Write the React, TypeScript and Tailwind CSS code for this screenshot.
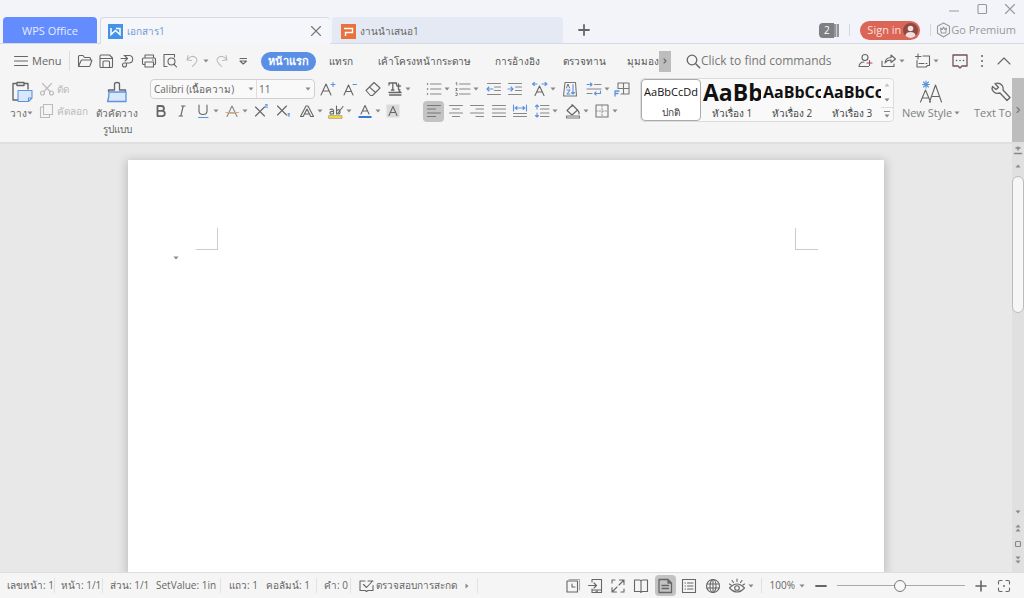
import React from "react";

type IconProps = { children: React.ReactNode; w?: number; h?: number; className?: string };

function Icon({ children, w = 18, h = 18, className = "" }: IconProps) {
  return (
    <svg
      width={w}
      height={h}
      viewBox={`0 0 ${w} ${h}`}
      fill="none"
      stroke="currentColor"
      strokeWidth="1.1"
      strokeLinecap="round"
      strokeLinejoin="round"
      aria-hidden="true"
      className={`shrink-0 ${className}`}
    >
      {children}
    </svg>
  );
}

function Caret() {
  return (
    <svg width="6" height="4" viewBox="0 0 6 4" aria-hidden="true" className="shrink-0">
      <path d="M0.5 0.5h5L3 3.5z" fill="#888" />
    </svg>
  );
}

type ToolProps = {
  label: string;
  slot: string;
  icon: React.ReactNode;
  caret?: boolean;
  active?: boolean;
};

function Tool({ label, slot, icon, caret, active }: ToolProps) {
  return (
    <div className={`flex shrink-0 ${slot}`}>
      <button type="button" aria-label={label} aria-pressed={active} className="flex h-[22px] items-center">
        <span
          className={`flex h-[21px] w-[21px] items-center justify-center rounded ${active ? "bg-[#c3c3c3]" : ""}`}
        >
          {icon}
        </span>
        {caret && <Caret />}
      </button>
    </div>
  );
}

const BLUE = "#5b93e0";

const quickTools: ToolProps[] = [
  {
    label: "Open", slot: "w-[21px]",
    icon: <Icon><path d="M2.500 14.500V4.500q0-1 1-1h3.500l1.500 2h5q1 0 1 1v1.500M2.500 14.500h10.500q.8 0 1-.7l1.800-5q.2-.8-.7-.8H6q-.8 0-1 .7z" /></Icon>,
  },
  {
    label: "Save", slot: "w-[21px]",
    icon: <Icon><path d="M3 5V4q0-1 1-1h8.500L15.500 6v8.500q0 1-1 1H4q-1 0-1-1zM3 6.500h12M6 15.500V10q0-1 1-1h4.500q1 0 1 1v5.500" /></Icon>,
  },
  {
    label: "Export", slot: "w-[22px]",
    icon: <Icon><path d="M6 3.500h5.500a3.800 3.800 0 0 1 0 7.500H8M8.500 11v2a2 2 0 1 1-2-2h2M3 6.500h6M7 4l2.500 2.500L7 9" /></Icon>,
  },
  {
    label: "Print", slot: "w-[21px]",
    icon: <Icon><path d="M5 6V3h8.500v3M5 12.500H3.500q-1 0-1-1V7q0-1 1-1h11q1 0 1 1v4.500q0 1-1 1H13.500M5 10h8.500v5H5zM12.500 8h.8" /></Icon>,
  },
  {
    label: "Print preview", slot: "w-[23px]",
    icon: <Icon><path d="M6 14.500H3V2.500h10.500V5M15.500 14.800L12.800 12.100" /><circle cx="10.500" cy="9.500" r="3.500" /></Icon>,
  },
  {
    label: "Undo", slot: "w-[28px] text-[#bbb]", caret: true,
    icon: <Icon><path d="M4 3.500L3 8l4.500.5M3.500 7.800c2-3.500 6-4.500 8.500-2 2 2.200 1 4.500-3.500 8.500" /></Icon>,
  },
  {
    label: "Redo", slot: "w-[22px] text-[#bbb]",
    icon: <Icon><path d="M14 3.500L15 8l-4.500.5M14.500 7.800c-2-3.500-6-4.500-8.500-2-2 2.200-1 4.500 3.500 8.500" /></Icon>,
  },
  {
    label: "Customize quick access", slot: "w-[29px]",
    icon: <Icon><path d="M6 6.500h6.500M6 9h6.500L9.200 12z" /></Icon>,
  },
];

const formatTop: ToolProps[] = [
  { label: "Grow font", slot: "w-[22px]", icon: <Icon><path d="M2 15L7 4L12 15M3.700 11h6.600" /><path stroke={BLUE} d="M12 4.500h4M14 2.500v4" /></Icon> },
  { label: "Shrink font", slot: "w-[23px]", icon: <Icon><path d="M3 15L7.500 5L12 15M4.700 11.500h5.600" /><path stroke={BLUE} d="M12 4.500h3.500" /></Icon> },
  { label: "Clear formatting", slot: "w-[22px]", icon: <Icon><path d="M2 10.500L10 2.500l6 5.500L8.500 15.500H6.500zM5.500 7.200l6 5.300" /></Icon> },
  { label: "Text tools", slot: "w-[39px]", caret: true, icon: <Icon><path strokeWidth="1.300" d="M3 5V3h7.500v2M6.800 3v7M5.500 10H8M12.500 4v5q0 1 1.500.8M11 6h3.500M3 12.500h12M15 12.500l-2-1.500M3.500 15H15" /></Icon> },
  { label: "Bullets", slot: "w-[29px]", caret: true, icon: <Icon><path strokeWidth="1.500" d="M2.500 4h.1M2.500 9h.1M2.500 14h.1" /><path stroke="#888" d="M5.500 4H16M5.500 9H16M5.500 14H16" /></Icon> },
  { label: "Numbering", slot: "w-[31px]", caret: true, icon: <Icon><path d="M2 3l.8-.5V5M1.800 8.500h1.400L1.800 10.500h1.400M1.800 13h1.400v2.500H1.800" strokeWidth=".8" /><path stroke="#888" d="M5.500 4H16M5.500 9H16M5.500 14H16" /></Icon> },
  { label: "Decrease indent", slot: "w-[21px]", icon: <Icon><path stroke="#888" d="M2.500 3.500h13M9.500 7h6M9.500 10.500h6M2.500 14.500h13" /><path stroke={BLUE} d="M2 9h6M4 7L2 9l2 2" /></Icon> },
  { label: "Increase indent", slot: "w-[25px]", icon: <Icon><path stroke="#888" d="M2.500 3.500h13M9.500 7h6M9.500 10.500h6M2.500 14.500h13" /><path stroke={BLUE} d="M2 9h5M5 7l2 2-2 2" /></Icon> },
  { label: "Text scale", slot: "w-[30px]", caret: true, icon: <Icon><path d="M4 15.500L8.500 6L13 15.500M5.700 12h5.600" /><path stroke={BLUE} d="M1.500 4H6M3.500 2.500L1.500 4l2 1.500M11 4h5M14 2.500L16 4l-2 1.500" /></Icon> },
  { label: "Sort", slot: "w-[24px]", icon: <Icon><path stroke="#777" d="M4 2.500h10.500L15.500 16H2.500z" /><path d="M5.500 8l1.500-4 1.500 4" strokeWidth=".9" /><path stroke={BLUE} d="M6 10h3l-3 4h3M12 4.500V14M10.500 12.500L12 14l1.500-1.500" /></Icon> },
  { label: "Line wrap", slot: "w-[28px]", caret: true, icon: <Icon><path stroke="#888" d="M9.500 4.500H16M2 9h14M2 13.500h5" /><path stroke={BLUE} d="M2 4.500h5M5.500 3L7 4.500 5.500 6M15.500 11v2.500H9.500M11 12l-1.500 1.500L11 15" /></Icon> },
  { label: "Tab stops", slot: "w-[21px]", icon: <Icon><path stroke="#777" d="M5 8.500V3h11v11H8M5 8.500h11M10.500 3v11" /><path stroke={BLUE} strokeWidth="1.300" d="M2 16v-5h4M2 13.500h3" /></Icon> },
];

const formatBottom: ToolProps[] = [
  { label: "Bold", slot: "w-[21px]", icon: <Icon><path strokeWidth="1.800" d="M5.500 4h4a2.400 2.400 0 0 1 0 4.900h-4zM5.500 8.900h4.700a2.600 2.600 0 0 1 0 5.200H5.500z" /></Icon> },
  { label: "Italic", slot: "w-[21px]", icon: <Icon><path d="M8.500 4h3.500M6 14h3.500M10.200 4L7.800 14" /></Icon> },
  { label: "Underline", slot: "w-[29px]", caret: true, icon: <Icon><path d="M5 3v6q0 3.500 4 3.500T13 9V3" /><path stroke={BLUE} d="M4.500 15.500h9.500" /></Icon> },
  { label: "Strikethrough", slot: "w-[29px]", caret: true, icon: <Icon><path stroke="#888" d="M4 14.500L9 4L14 14.500M5.700 11h6.600" /><path stroke="#d9a877" d="M3 10.500h12.500" /></Icon> },
  { label: "Superscript", slot: "w-[22px]", icon: <Icon><path d="M3.500 5l9 9M12.500 5l-9 9" /><path stroke={BLUE} d="M13.500 2.500h1.800v1.300h-1.800v1.500h2" strokeWidth=".9" /></Icon> },
  { label: "Subscript", slot: "w-[24px]", icon: <Icon><path d="M3.500 4l9 9M12.500 4l-9 9" /><path stroke={BLUE} d="M14 11.500h1.500v1.200H14V14h1.700" strokeWidth=".9" /></Icon> },
  { label: "Text effects", slot: "w-[29px]", caret: true, icon: <Icon><path d="M2.500 14.500L8 4h2l5.500 10.500h-2.800L9 7l-3.800 7.500zM6.500 12h5" /></Icon> },
  {
    label: "Highlight", slot: "w-[29px]", caret: true,
    icon: <Icon><path d="M3 7.500q3.500-1 3.500 1V12M6.500 9.500Q3 9 3 11t3.500.5M9.500 4v8M9.500 9q3-3 3.500.5T9.500 11.500M16 4.500L11 11" /><path stroke="#f0df45" strokeWidth="2.500" strokeLinecap="butt" d="M2 15h13" /><path stroke="#a09a50" strokeWidth=".7" d="M2 13.600h13v2.800H2z" /></Icon>,
  },
  { label: "Font color", slot: "w-[28px]", caret: true, icon: <Icon><path d="M5 12L9 3.500L13 12M6.300 9h5.400" /><path stroke="#3978cf" strokeWidth="2" strokeLinecap="butt" d="M2.500 15h13" /></Icon> },
  { label: "Character shading", slot: "w-[41px]", icon: <Icon><path fill="#dadada" stroke="none" d="M2.500 2.500h13v13h-13z" /><path d="M5 13.500L9 4.500L13 13.500M6.300 10.500h5.400" /></Icon> },
  { label: "Align left", slot: "w-[22px]", active: true, icon: <Icon><path stroke="#777" d="M2.500 3.500h13M2.500 7h8M2.500 11h13M2.500 14.500h8" /></Icon> },
  { label: "Center", slot: "w-[21px]", icon: <Icon><path stroke="#888" d="M2.500 3.500h13M5.500 7h7M2.500 11h13M5.500 14.500h7" /></Icon> },
  { label: "Align right", slot: "w-[22px]", icon: <Icon><path stroke="#888" d="M2.500 3.500h13M8 7h7.500M2.500 11h13M8 14.500h7.500" /></Icon> },
  { label: "Justify", slot: "w-[21px]", icon: <Icon><path stroke="#888" d="M2.500 3.500h13M2.500 7h13M2.500 11h13M2.500 14.500h13" /></Icon> },
  { label: "Distribute", slot: "w-[22px]", icon: <Icon><path stroke={BLUE} d="M2.500 3v6M15.500 3v6M4 6h10M6 4.500L4.300 6 6 7.500M12 4.500L13.700 6 12 7.500" /><path stroke="#888" d="M2.500 11.500h13M2.500 14.500h13" /></Icon> },
  { label: "Line spacing", slot: "w-[31px]", caret: true, icon: <Icon><path stroke="#888" d="M7.500 3.500H16M7.500 7H16M7.500 11H16M7.500 14.500H16" /><path stroke={BLUE} d="M4 3v4M2.500 4.500L4 3l1.500 1.500M4 11v4M2.500 13.500L4 15l1.500-1.500" /></Icon> },
  { label: "Shading", slot: "w-[29px]", caret: true, icon: <Icon><path d="M3 8.500L8.500 3l5 5L8 13zM8 2.500v2M13.500 8q2 2 1.500 4" /><path stroke="#777" d="M2.500 14h13v2h-13z" /></Icon> },
  { label: "Borders", slot: "w-[27px]", caret: true, icon: <Icon><path stroke="#777" d="M3 3h12v12H3z" /><path stroke="#999" strokeDasharray="1.500 1.500" d="M9 3v12M3 9h12" /></Icon> },
];

const ribbonTabs = [
  { name: "แทรก", slot: "w-[50px]" },
  { name: "เค้าโครงหน้ากระดาษ", slot: "w-[116px]" },
  { name: "การอ้างอิง", slot: "w-[70px]" },
  { name: "ตรวจทาน", slot: "w-[64px]" },
  { name: "มุมมอง", slot: "w-[43px] pl-2.5" },
];

const stylesList = [
  { name: "ปกติ", sample: "AaBbCcDd", text: "text-[11px]", active: true },
  { name: "หัวเรื่อง 1", sample: "AaBb", text: "text-[23px] font-bold", active: false },
  { name: "หัวเรื่อง 2", sample: "AaBbCc", text: "text-base font-bold", active: false },
  { name: "หัวเรื่อง 3", sample: "AaBbCc", text: "text-base font-bold", active: false },
];

const views: ToolProps[] = [
  { label: "Version history", slot: "w-[23px]", icon: <Icon><path d="M3 4h10.500v11H3zM8 7v3h3" /><path stroke="#aaa" d="M5 2.500h10.500V13" /></Icon> },
  { label: "Send to phone", slot: "w-[22px]", icon: <Icon><path d="M5 5V2.500h9.500v13H5V12M5 13h9.500M1.500 8.500H9M7 6l2.500 2.500L7 11M9 14.300h1.500" /></Icon> },
  { label: "Full screen", slot: "w-[23px]", icon: <Icon><path d="M10.500 3H15v4.500M15 3l-5 5M7.500 15H3v-4.500M3 15l5-5M3 6V3h3M15 12v3h-3" /></Icon> },
  { label: "Reading", slot: "w-[24px]", icon: <Icon><path d="M2.500 3h5q1.500 0 1.500 1.500 0-1.500 1.500-1.500h5v11.500h-5q-1.500 0-1.500 1 0-1-1.500-1h-5zM9 4.500v10.500" /></Icon> },
  { label: "Page view", slot: "w-[24px]", active: true, icon: <Icon><path strokeWidth="1.300" d="M3 2.500h9L15.500 6v9.500H3zM12 2.500V6h3.500M6 8.500h6.500M6 11.500h6.500" /></Icon> },
  { label: "Outline", slot: "w-[24px]", icon: <Icon><path d="M2.500 2.500h13v13h-13zM5 6h.5M5 9h.5M5 12h.5M7.500 6H13M7.500 9H13M7.500 12H13" /></Icon> },
  { label: "Web layout", slot: "w-[24px]", icon: <Icon><circle cx="9" cy="9" r="6.500" /><ellipse cx="9" cy="9" rx="3" ry="6.500" /><path d="M3 7h12M3 11h12M9 2.500v13" /></Icon> },
  { label: "Eye protection", slot: "w-[28px]", caret: true, icon: <Icon><path d="M1.500 11q7.500-8 15 0-7.500 8-15 0zM9 2v2.500M4 3.500l1.500 2M14 3.500l-1.500 2M1.500 7L3 8M16.500 7L15 8" /><circle cx="9" cy="11" r="2.300" /></Icon> },
];

function Stat({ children, slot }: { children: React.ReactNode; slot: string }) {
  return <span className={`shrink-0 whitespace-nowrap ${slot}`}>{children}</span>;
}

export default function App() {
  return (
    <div className="flex h-screen flex-col overflow-hidden bg-[#f5f5f5] font-['Open_Sans','Noto_Sans',sans-serif] text-[11px] text-[#666]">
      <header className="flex h-11 shrink-0 justify-between border-b border-[#d5d9e0] bg-[#f2f4f9]">
        <div className="flex items-end pl-[3px]">
          <button type="button" className="h-[26px] w-[94px] rounded-t bg-[#638cff] pt-0.5 text-[#e6edff]">
            WPS Office
          </button>
          <div className="-mb-px ml-[3px] flex h-[27px] w-[230px] items-center rounded-t border-t border-l border-[#d8dbe2] bg-[#f5f6f9] pr-2 pl-[7px]">
            <svg width="15" height="15" viewBox="0 0 15 15" aria-hidden="true">
              <path fill="#4593e8" d="M0 0h15v15H0z" />
              <path d="M3 4v6.500l4.500-4 4.500 4V4.500H8" stroke="#fff" strokeWidth="1.500" fill="none" />
            </svg>
            <a href="#document" className="ml-1 flex-1 text-[10px] text-[#6d9cd6]">เอกสาร1</a>
            <button type="button" aria-label="Close tab" className="text-[#777]">
              <Icon w={12} h={12}><path d="M1.500 1.500l9 9M10.500 1.500l-9 9" /></Icon>
            </button>
          </div>
          <div className="ml-0.5 flex h-[26px] w-[231px] items-center rounded-t bg-[#e5e9f3] pt-0.5 pl-[9px]">
            <svg width="15" height="15" viewBox="0 0 15 15" aria-hidden="true">
              <path fill="#e9713d" d="M0 0h15v15H0z" />
              <path d="M3 4.500h8.500v4H4.500V12" stroke="#fff" strokeWidth="1.400" fill="none" />
            </svg>
            <a href="#presentation" className="ml-1 text-[10px]">งานนำเสนอ1</a>
          </div>
          <button type="button" aria-label="New tab" className="mb-1.5 ml-3.5">
            <Icon w={14} h={14}><path strokeWidth="1.800" d="M7 2v10M2 7h10" /></Icon>
          </button>
        </div>
        <div className="flex flex-col items-end pr-2 text-[#999]">
          <div className="flex h-[17px] items-center gap-4">
            <button type="button" aria-label="Minimize"><Icon w={12} h={12}><path d="M1.500 8h9" /></Icon></button>
            <button type="button" aria-label="Maximize"><Icon w={12} h={12}><rect x="2" y="1.500" width="8.500" height="9" rx="1" /></Icon></button>
            <button type="button" aria-label="Close"><Icon w={12} h={12}><path d="M1.500 1.500l9 9M10.500 1.500l-9 9" /></Icon></button>
          </div>
          <div className="flex h-[26px] items-center">
            <button type="button" aria-label="2 open documents" className="flex h-[15px] items-center">
              <span className="h-[15px] w-[15px] rounded-l bg-[#7d7f83] text-[10px] leading-[15px] text-white">2</span>
              <span className="h-[13px] w-[5px] border-x-2 border-[#94969a] bg-[#c8cace]" />
            </button>
            <span className="mx-[10px] h-3 w-px bg-[#d5d7dc]" />
            <button type="button" className="flex h-[19px] w-[60px] items-center justify-between rounded-full bg-[#db6556] pr-0.5 pl-[7px] whitespace-nowrap text-[#fbe0dc]">
              Sign in
              <svg width="15" height="15" viewBox="0 0 15 15" aria-hidden="true" className="shrink-0">
                <circle cx="7.500" cy="7.500" r="7.500" fill="#8a4a45" />
                <circle cx="7.500" cy="5.500" r="2.800" fill="#f5ddd9" />
                <path d="M2.500 13q0-4 5-4t5 4q-5 4-10 0z" fill="#f5ddd9" />
              </svg>
            </button>
            <span className="mr-[5px] ml-[10px] h-3 w-px bg-[#d5d7dc]" />
            <button type="button" className="flex items-center whitespace-nowrap">
              <Icon w={15} h={16}><path d="M7.500 1l6 3.300v7L7.500 15l-6-3.700v-7zM4.500 6l.8 5h4.400l.8-5-1.800 1.500L7.500 5 6.300 7.500z" /></Icon>
              Go Premium
            </button>
          </div>
        </div>
      </header>

      <nav className="flex h-[34px] shrink-0 items-center">
        <button type="button" className="ml-[13px] flex h-5 w-[57px] items-center gap-1 border-r border-[#ddd]">
          <Icon w={15} h={14}><path d="M1.500 2.500h13M1.500 7h13M1.500 11.500h13" /></Icon>
          Menu
        </button>
        <div className="ml-1 flex">
          {quickTools.map((t) => <Tool key={t.label} {...t} />)}
        </div>
        <a href="#home" className="flex h-[19px] w-[55px] shrink-0 items-center justify-center rounded-full bg-[#5a8fe6] font-bold text-white">
          หน้าแรก
        </a>
        {ribbonTabs.map((t) => (
          <a key={t.name} href="#ribbon" className={`flex shrink-0 justify-center text-[10px] whitespace-nowrap text-[#555] ${t.slot}`}>
            {t.name}
          </a>
        ))}
        <button type="button" aria-label="More tabs" className="flex h-[21px] w-3 shrink-0 items-center justify-center bg-[#bdbdbd]">
          <Icon w={6} h={6}><path d="M2 1l2 2-2 2" /></Icon>
        </button>
        <label className="ml-[15px] flex min-w-0 flex-1 items-center">
          <Icon w={15} h={15}><circle cx="6" cy="6" r="4.800" strokeWidth="1.300" /><path strokeWidth="1.500" d="M9.700 9.700l4 4" /></Icon>
          <input
            aria-label="Find commands"
            placeholder="Click to find commands"
            className="min-w-0 flex-1 bg-transparent text-xs outline-none placeholder:text-[#777]"
          />
        </label>
        <div className="flex pr-[10px]">
          <Tool label="Share with user" slot="w-[24px]" icon={<Icon><circle cx="9" cy="5.500" r="3" /><path d="M8 10q-4.500 0-5 4.500h9.500" /><path stroke="#a3475a" d="M11 11h5M13.500 8.500v5" /></Icon>} />
          <Tool label="Share" slot="w-[34px]" caret icon={<Icon><path d="M2 9v5.500h12V12M5 11q.5-5.500 6-5.500V3l4.500 4-4.500 3.500V8Q7 8 5 11z" /></Icon>} />
          <Tool label="Cloud file" slot="w-[37px]" caret icon={<Icon><path d="M9 4h6.500v9.500h-2L12 15H3V8.500M5 11.500h5M12 11.500h1M1.500 4.500H7M4 2v5" /></Icon>} />
          <Tool label="Comments" slot="w-[22px]" icon={<Icon><path stroke="#70525a" strokeWidth="1.300" d="M2 3h14v11h-5L9 16l-2-2H2z" /><path strokeWidth="1.600" d="M5.500 8.500h.1M9 8.500h.1M12.500 8.500h.1" /></Icon>} />
          <Tool label="More" slot="w-[22px]" icon={<Icon><path strokeWidth="1.900" d="M9 4h.1M9 9h.1M9 14h.1" /></Icon>} />
          <Tool label="Collapse ribbon" slot="w-[21px]" icon={<Icon><path d="M3 12l6-6 6 6" /></Icon>} />
        </div>
      </nav>

      <section aria-label="Ribbon" className="flex h-16 shrink-0 overflow-hidden">
        <button type="button" className="ml-2 flex w-[27px] shrink-0 flex-col items-center pt-0.5 text-[10px]">
          <Icon w={24} h={24}>
            <path strokeWidth="1.400" d="M9 20H3V3.500h3M15 3.500h3V9M7 2.500h7v3H7z" />
            <path fill="#d9e7fb" stroke={BLUE} d="M8 10.500h14v7.500l-3.500 3.500H8zM22 18h-3.500v3.500" />
          </Icon>
          <span className="flex h-[18px] items-center whitespace-nowrap">วาง<Caret /></span>
        </button>
        <div className="flex w-[58px] shrink-0 flex-col pl-1 text-[10px] text-[#bbb]">
          <button type="button" className="flex h-[22px] items-center gap-0.5 whitespace-nowrap">
            <Icon w={16} h={16}><path d="M3.500 2.500l8 8.500M12.500 2.500L4.500 11" /><circle cx="3.500" cy="12" r="2" /><circle cx="12.500" cy="12" r="2" /></Icon>
            ตัด
          </button>
          <button type="button" className="flex h-[22px] items-center gap-0.5 whitespace-nowrap">
            <Icon w={16} h={16}><path d="M4.500 1.500h9v10h-9zM4.500 4h-3v10.500h9v-3" /></Icon>
            คัดลอก
          </button>
        </div>
        <button type="button" className="flex w-12 shrink-0 flex-col items-center pt-0.5 text-[10px]">
          <Icon w={24} h={24}>
            <path strokeWidth="1.300" d="M3.500 11.500V10h6V4q0-1.500 2.500-1.500T14.500 4v6h6v1.500" />
            <path fill="#d9e7fb" stroke={BLUE} strokeWidth="1.300" d="M4 12h17v9.500H2.500Q4 18 4 12z" />
          </Icon>
          <span className="pt-px text-center leading-4 whitespace-nowrap">ตัวคัดวาง<br />รูปแบบ</span>
        </button>

        <div className="ml-[9px] flex shrink-0 flex-col">
          <div className="flex h-[22px] items-center">
            <div className="flex h-5 w-[165px] items-center rounded border border-[#d0d0d0] bg-[#f9f9f9]">
              <label className="flex h-full w-[106px] items-center border-r border-[#ddd] pr-0.5">
                <select aria-label="Font" className="min-w-0 flex-1 appearance-none bg-transparent pl-[3px] text-[10px] outline-none">
                  <option>Calibri (เนื้อความ)</option>
                </select>
                <Caret />
              </label>
              <label className="flex h-full flex-1 items-center pr-[3px]">
                <select aria-label="Font size" className="min-w-0 flex-1 appearance-none bg-transparent pl-0.5 text-[10px] outline-none">
                  <option>11</option>
                </select>
                <Caret />
              </label>
            </div>
            <div className="ml-0.5 flex">
              {formatTop.map((t) => <Tool key={t.label} {...t} />)}
            </div>
          </div>
          <div className="flex h-[22px]">
            {formatBottom.map((t) => <Tool key={t.label} {...t} />)}
          </div>
        </div>

        <div className="ml-2 flex h-11 shrink-0 rounded border border-[#ddd] bg-[#f9f9f9]">
          {stylesList.map((s) => (
            <button
              key={s.name}
              type="button"
              className={`flex w-[60px] flex-col items-center overflow-hidden ${s.active ? "rounded-sm border border-[#aaa] bg-white" : "pl-0.5"}`}
            >
              <span className={`flex h-[26px] w-full items-center overflow-hidden whitespace-nowrap text-[#111] ${s.text} ${s.active ? "justify-center" : ""}`}>
                {s.sample}
              </span>
              <span className="h-4 text-[10px] leading-4 whitespace-nowrap text-[#444]">{s.name}</span>
            </button>
          ))}
          <div className="flex w-3 flex-col items-center">
            <button type="button" aria-label="Previous styles" className="flex h-[13px] rotate-180 items-center opacity-50"><Caret /></button>
            <button type="button" aria-label="Next styles" className="flex h-[15px] items-center"><Caret /></button>
            <button type="button" aria-label="All styles" className="flex h-[14px] w-full flex-col items-center justify-center gap-0.5 border-t border-[#ddd]">
              <span className="h-px w-1.5 bg-[#888]" />
              <Caret />
            </button>
          </div>
        </div>

        <button type="button" className="ml-2 flex w-[58px] shrink-0 flex-col items-center pt-0.5 text-[#808080]">
          <Icon w={24} h={24} className="text-[#666]">
            <path d="M1.500 22L6.500 10l5 12M3.500 18h6M10.500 22L16.500 5l6 17M12.500 16.500h8" />
            <path stroke={BLUE} d="M7 1v7M3.500 4.500h7M4.500 2l5 5M9.500 2l-5 5" />
          </Icon>
          <span className="flex h-[18px] items-center gap-0.5 whitespace-nowrap">New Style<Caret /></span>
        </button>
        <div className="flex min-w-0 flex-1 overflow-hidden pl-[14px]">
          <button type="button" className="flex shrink-0 flex-col items-center pt-0.5 text-[#808080]">
            <Icon w={24} h={24} className="text-[#666]">
              <path strokeWidth="1.300" d="M7 3.500q5-1.500 7.500 2.500 1 2 .5 4l7 7.500-3 3L12 13q-6 1.500-8-4l.5-2.500L8 9.500l2.500-2z" />
            </Icon>
            <span className="h-[18px] leading-[18px] whitespace-nowrap">Text Tools</span>
          </button>
        </div>
        <button type="button" aria-label="Scroll ribbon" className="flex w-3 shrink-0 items-center justify-center bg-[#bdbdbd] text-[#777]">
          <Icon w={6} h={8}><path d="M2 1.500L4.500 4 2 6.500" /></Icon>
        </button>
      </section>

      <div className="flex min-h-0 flex-1 border-t-2 border-[#dfdfdf] bg-[#e8e8e8]">
        <main className="flex min-w-0 flex-1 overflow-hidden px-10 pt-4">
          <article aria-label="Document page" className="relative mx-auto flex w-full max-w-[756px] justify-between bg-white pt-[68px] pr-[66px] pl-[68px] shadow-[0_2px_9px_2px_rgba(0,0,0,0.18)]">
            <span className="h-[22px] w-[22px] border-r border-b border-[#ccc]" />
            <span className="h-[22px] w-[23px] border-b border-l border-[#ccc]" />
            <span className="absolute top-24 left-[45px]"><Caret /></span>
          </article>
        </main>
        <aside aria-label="Scroll bar" className="flex w-3 shrink-0 flex-col items-center bg-[#e0e0e0] text-[#888]">
          <button type="button" aria-label="Ruler" className="mt-0.5"><Icon w={10} h={10}><path d="M5 1v3M3 2h4M1.500 7.500h7" strokeWidth="1.500" /></Icon></button>
          <button type="button" aria-label="Scroll up" className="flex h-5 rotate-180 items-center"><Caret /></button>
          <div className="h-[137px] w-3 shrink-0 rounded-full border border-[#bbb] bg-[#f6f6f6]" />
          <div className="flex-1" />
          <button type="button" aria-label="Scroll down" className="flex h-4 items-center"><Caret /></button>
          <button type="button" aria-label="Previous page" className="flex h-4 rotate-180 flex-col justify-center"><Caret /><Caret /></button>
          <button type="button" aria-label="Browse object" className="flex h-4 items-center"><Icon w={8} h={8}><rect x="1.500" y="1.500" width="5" height="5" rx="1" /></Icon></button>
          <button type="button" aria-label="Next page" className="mb-1 flex h-4 flex-col justify-center"><Caret /><Caret /></button>
        </aside>
      </div>

      <footer className="flex h-[26px] shrink-0 items-center justify-between border-t border-[#ddd] text-[10px]">
        <div className="flex items-center pl-[7px]">
          <Stat slot="w-[48px] border-r border-[#e2e2e2]">เลขหน้า: 1</Stat>
          <Stat slot="w-[48px] border-r border-[#e2e2e2] pl-1.5">หน้า: 1/1</Stat>
          <Stat slot="w-[53px] pl-[7px]">ส่วน: 1/1</Stat>
          <Stat slot="w-[65px] border-r border-[#e2e2e2]">SetValue: 1in</Stat>
          <Stat slot="w-[45px] pl-2">แถว: 1</Stat>
          <Stat slot="w-[51px] border-r border-[#e2e2e2]">คอลัมน์: 1</Stat>
          <Stat slot="w-[34px] border-r border-[#e2e2e2] pl-[7px]">คำ: 0</Stat>
          <button type="button" className="ml-2 flex items-center gap-0.5 border-r border-[#e2e2e2] pr-2 whitespace-nowrap">
            <Icon w={15} h={14}><path d="M6 2H1v9.500h5l1.500 1 1.500-1h5V6.500M4.500 5.500l3 3L13.500 2M9 2h5" /></Icon>
            ตรวจสอบการสะกด
            <svg width="4" height="6" viewBox="0 0 4 6" aria-hidden="true" className="ml-1.5"><path d="M0.500 0.500v5L3.500 3z" fill="#888" /></svg>
          </button>
        </div>
        <div className="flex items-center pr-[13px]">
          {views.map((t) => <Tool key={t.label} {...t} />)}
          <div className="ml-1.5 flex items-center gap-1 border-l border-[#e0e0e0] pl-2">
            <span>100%</span>
            <Caret />
          </div>
          <button type="button" aria-label="Zoom out" className="ml-2.5"><Icon w={12} h={12}><path strokeWidth="1.800" d="M1 6h10" /></Icon></button>
          <input
            type="range"
            aria-label="Zoom"
            min="0"
            max="100"
            defaultValue="49"
            className="mx-2.5 h-3 w-[128px] appearance-none bg-[linear-gradient(#aaa,#aaa)] bg-[length:100%_1px] bg-center bg-no-repeat [&::-webkit-slider-thumb]:h-3 [&::-webkit-slider-thumb]:w-3 [&::-webkit-slider-thumb]:appearance-none [&::-webkit-slider-thumb]:rounded-full [&::-webkit-slider-thumb]:border [&::-webkit-slider-thumb]:border-solid [&::-webkit-slider-thumb]:border-[#777] [&::-webkit-slider-thumb]:bg-[#f8f8f8]"
          />
          <button type="button" aria-label="Zoom in"><Icon w={12} h={12}><path strokeWidth="1.600" d="M6 1v10M1 6h10" /></Icon></button>
          <button type="button" aria-label="Fit page" className="ml-2.5"><Icon w={14} h={14}><path d="M1.500 5V3q0-1.500 1.500-1.500h2M9 1.500h2q1.500 0 1.500 1.500v2M12.500 9v2q0 1.500-1.500 1.500H9M5 12.500H3Q1.500 12.500 1.500 11V9" /><path strokeWidth="1.800" d="M7 7h.1" /></Icon></button>
        </div>
      </footer>
    </div>
  );
}
